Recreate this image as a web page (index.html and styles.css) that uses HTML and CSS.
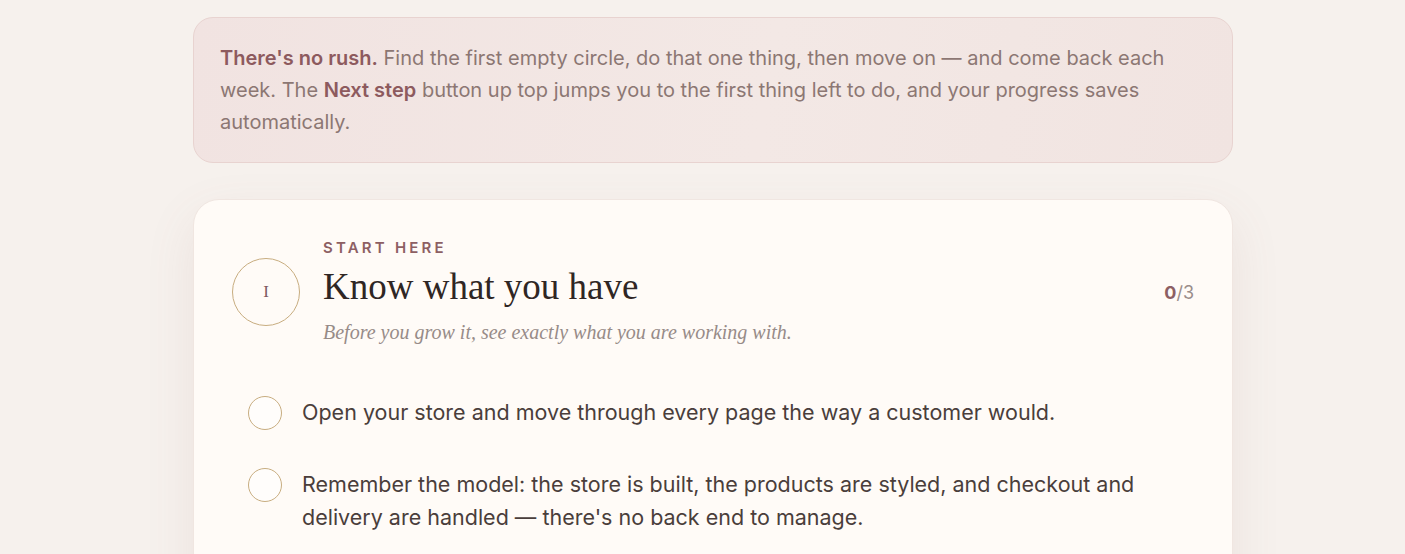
FILE: index.html
```html
<!DOCTYPE html>
<html lang="en">
<head>
  <meta charset="UTF-8">
  <meta name="viewport" content="width=device-width, initial-scale=1.0">
  <title>Store Checklist</title>
  <link rel="stylesheet" href="styles.css">
</head>
<body>

<div class="page">
  <div class="notice">
    <strong>There's no rush.</strong> Find the first empty circle, do that one thing, then move on — and come back each week. The <strong>Next step</strong> button up top jumps you to the first thing left to do, and your progress saves automatically.
  </div>

  <div class="stage">
    <div class="stage-head">
      <div class="stage-num">I</div>
      <div class="stage-info">
        <div class="stage-kicker">Start here</div>
        <h2 class="stage-title">Know what you have</h2>
        <p class="stage-sub">Before you grow it, see exactly what you are working with.</p>
      </div>
      <div class="stage-count"><b>0</b>/3</div>
    </div>

    <ul class="tasks">
      <li class="task">
        <span class="check"></span>
        <span class="task-text">Open your store and move through every page the way a customer would.</span>
      </li>
      <li class="task">
        <span class="check"></span>
        <span class="task-text">Remember the model: the store is built, the products are styled, and checkout and delivery are handled — there's no back end to manage.</span>
      </li>
    </ul>
  </div>
</div>

</body>
</html>
```

FILE: styles.css
```css
body {
  margin: 0;
  padding: 0 0 0 21px;
  background-color: #f6f1ed;
  font-family: Inter, "Noto Sans", sans-serif;
  color: #4a3e3b;
}

.page {
  width: 1040px;
  margin: 0 auto;
  padding-top: 17px;
}

/* Tip box at the top */
.notice {
  background: linear-gradient(100deg, #f1e3e1 0%, #f3e8e5 55%, #f1e4e1 100%);
  border: 1px solid #e8d3d0;
  border-radius: 20px;
  padding: 24px 26px;
  font-size: 20px;
  line-height: 32px;
  color: #8c7773;
}

.notice strong {
  color: #8d5a5e;
  font-weight: 600;
}

/* Stage card */
.stage {
  margin-top: 36px;
  background-color: #fffbf7;
  border: 1px solid #f0e6e1;
  border-radius: 26px;
  box-shadow: 0 18px 50px rgba(150, 100, 95, 0.10);
  padding: 39px 38px 40px 38px;
}

.stage-head {
  display: flex;
  align-items: center;
  gap: 23px;
}

.stage-num {
  width: 66px;
  height: 66px;
  flex-shrink: 0;
  border: 1.5px solid #c8ad80;
  border-radius: 50%;
  display: flex;
  align-items: center;
  justify-content: center;
  font-family: "Liberation Serif", serif;
  font-size: 17px;
  color: #7d5860;
}

.stage-info {
  flex: 1;
}

.stage-kicker {
  font-size: 15px;
  font-weight: 600;
  letter-spacing: 3.2px;
  text-transform: uppercase;
  color: #8d5f63;
  line-height: 18px;
}

.stage-title {
  margin: 8px 0 0 0;
  font-family: "Liberation Serif", serif;
  font-weight: 400;
  font-size: 37px;
  line-height: 44px;
  color: #2f2624;
}

.stage-sub {
  margin: 10px 0 0 0;
  font-family: "Liberation Serif", serif;
  font-style: italic;
  font-size: 20px;
  line-height: 26px;
  color: #978b88;
}

.stage-count {
  font-size: 18px;
  color: #9a8d8a;
}

.stage-count b {
  color: #8d5f63;
  font-weight: 700;
}

/* Checklist */
.tasks {
  list-style: none;
  margin: 51px 0 0 0;
  padding: 0 0 0 16px;
}

.task {
  display: flex;
  align-items: flex-start;
  gap: 20px;
  margin-bottom: 38px;
  font-size: 21.5px;
  line-height: 33px;
}

.check {
  width: 32px;
  height: 32px;
  flex-shrink: 0;
  border: 1.5px solid #c8ad80;
  border-radius: 50%;
  background-color: #fffdfb;
}
```
